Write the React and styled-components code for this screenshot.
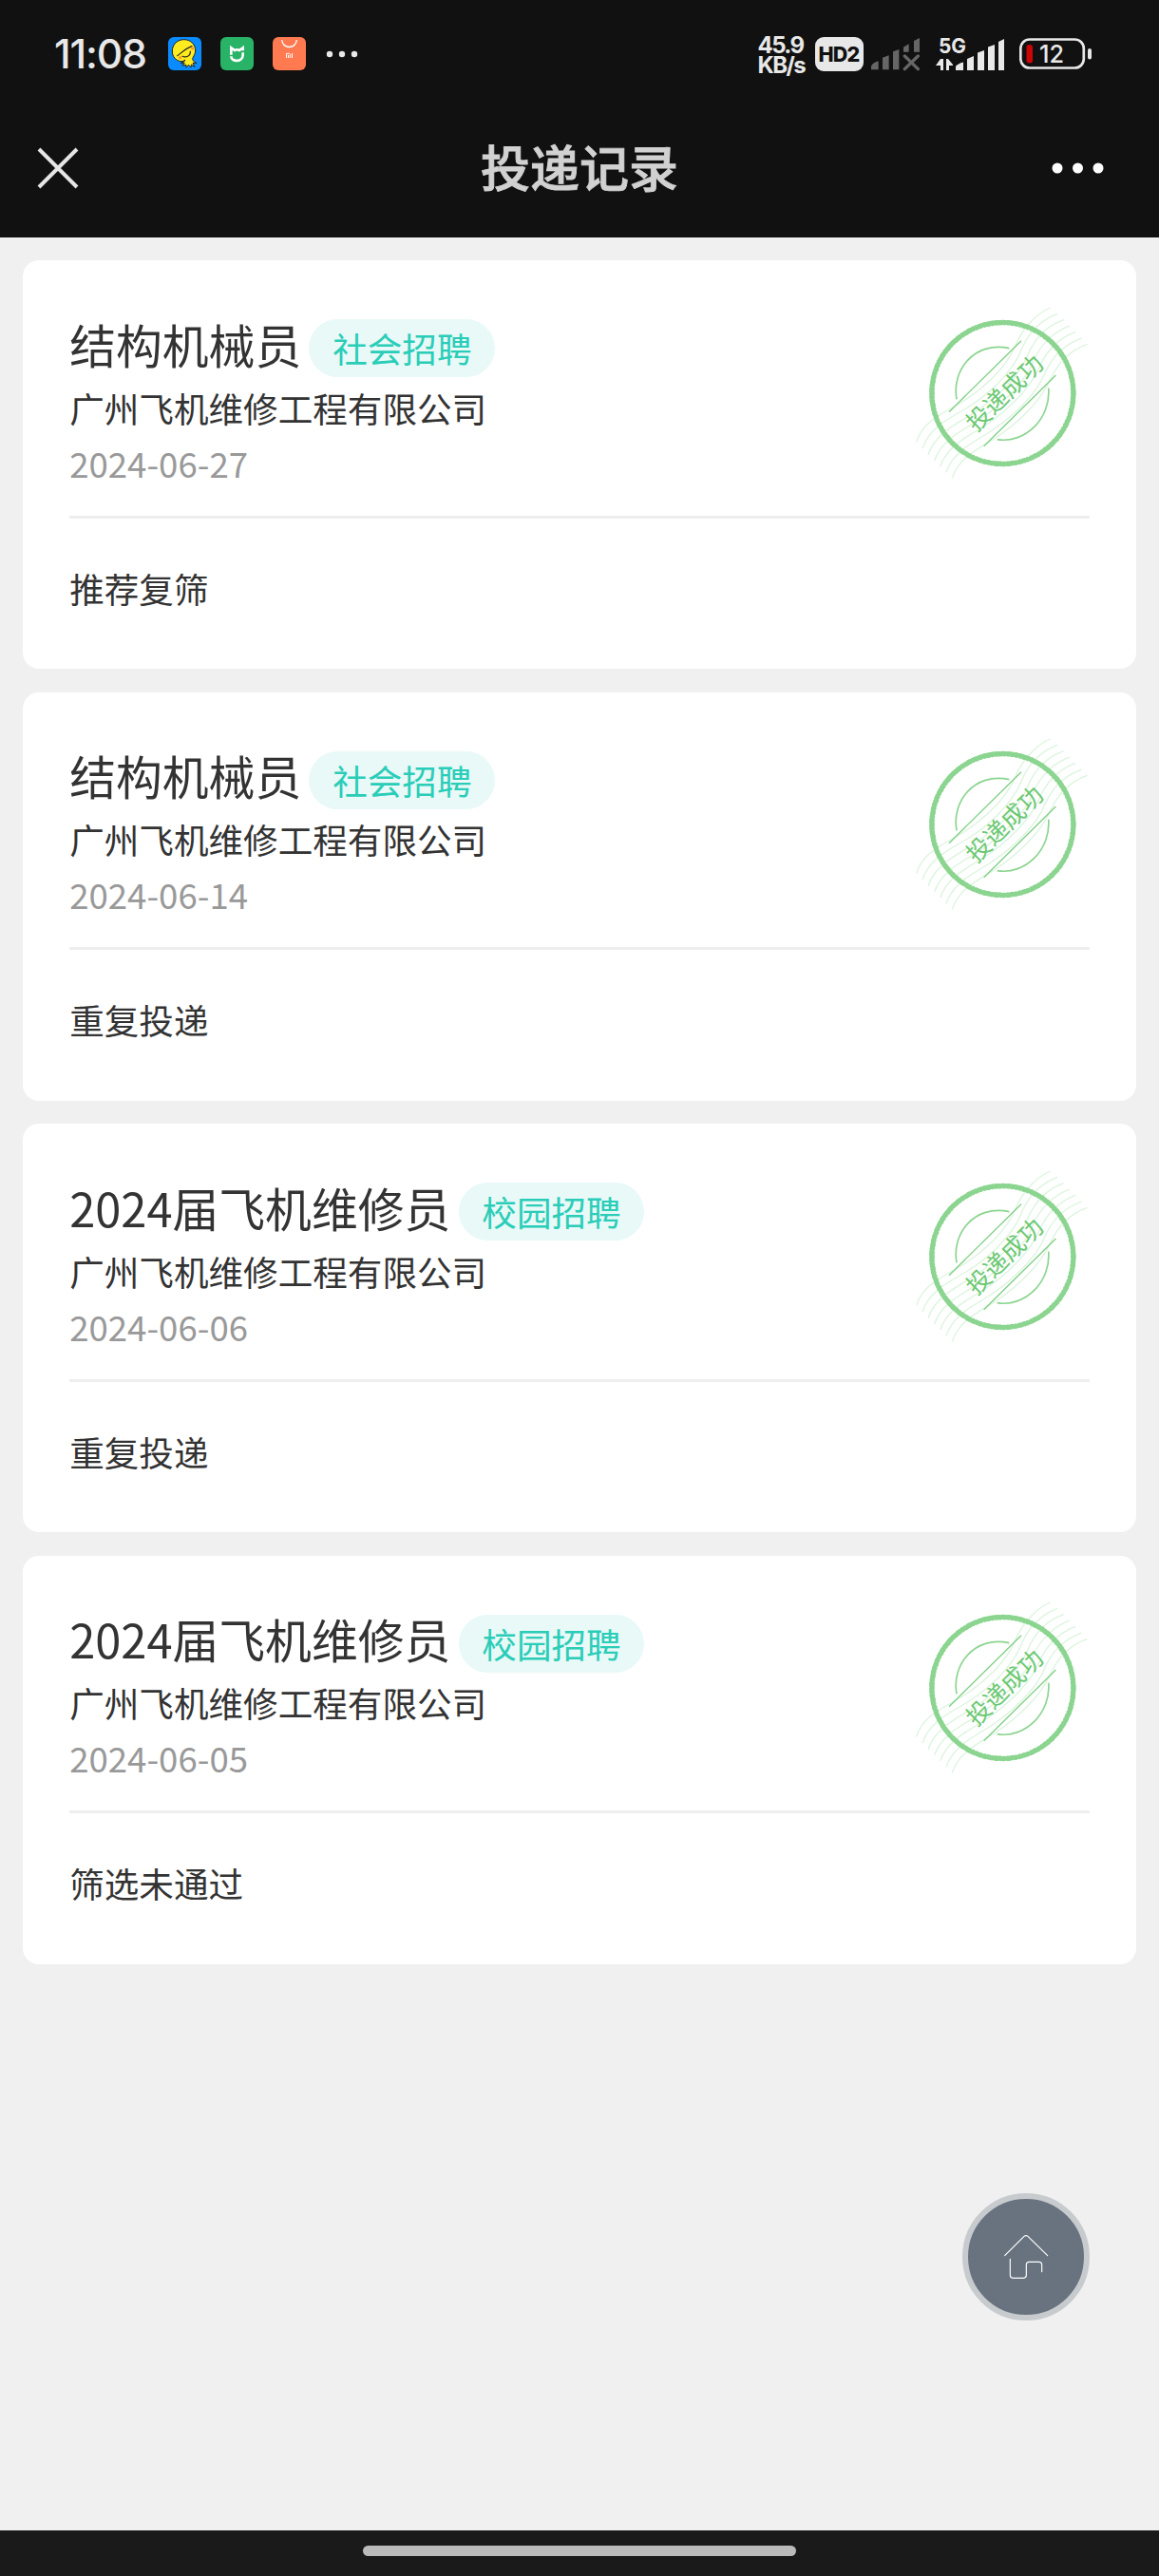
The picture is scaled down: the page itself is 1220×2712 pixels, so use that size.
import React from "react";
import styled, { createGlobalStyle } from "styled-components";

const cjk = `"Noto Sans CJK SC", "Noto Sans", sans-serif`;
const latin = `Inter, "Noto Sans CJK SC", sans-serif`;

const GlobalStyle = createGlobalStyle`
  * { box-sizing: border-box; }
  body { margin: 0; background: #f0f0f0; font-family: ${cjk}; }
  svg { display: block; flex: none; }
`;

const Screen = styled.div`
  position: relative;
  display: flex;
  flex-direction: column;
  width: 1220px;
  height: 2712px;
  overflow: hidden;
  background: #f0f0f0;
`;

const StatusBar = styled.div`
  display: flex;
  align-items: center;
  justify-content: space-between;
  height: 113px;
  padding: 0 71px 0 57px;
  background: #111;
  color: #e8e8e8;
  font-family: ${latin};
`;

const StatusGroup = styled.div`
  display: flex;
  align-items: center;
`;

const Clock = styled.span`
  width: 120px;
  font-size: 42.5px;
  font-weight: 500;
  line-height: 50px;
  letter-spacing: -1.1px;
  white-space: nowrap;
`;

const AppIcons = styled.div`
  display: flex;
  align-items: center;
  gap: 20px;
`;

const Speed = styled.div`
  display: flex;
  flex-direction: column;
  width: 60px;
  padding-top: 2px;
  font-size: 24px;
  font-weight: 700;
  line-height: 21px;
  letter-spacing: -1.6px;
  white-space: nowrap;
`;

const HdBadge = styled.span`
  display: flex;
  align-items: center;
  justify-content: center;
  width: 51px;
  height: 36px;
  margin-right: 8px;
  border-radius: 9px;
  background: #e8e8e8;
  color: #111;
  font-size: 21.5px;
  font-weight: 800;
  letter-spacing: -0.8px;
`;

const Gap = styled.span`
  width: ${(p) => p.$size}px;
`;

const NavBar = styled.header`
  display: grid;
  grid-template-columns: 60px 1fr 60px;
  align-items: center;
  height: 137px;
  padding: 0 54px 9px 37px;
  background: #111;
`;

const NavTitle = styled.h1`
  margin: 0;
  padding-left: 17px;
  color: #d1d1d1;
  font-size: 52px;
  font-weight: 500;
  line-height: 72px;
  text-align: center;
  padding-bottom: 5px;
  -webkit-text-stroke: 0.9px #d1d1d1;
`;

const List = styled.main`
  display: flex;
  flex: 1;
  flex-direction: column;
  gap: 24.4px;
  padding: 24.4px;
`;

const Card = styled.article`
  height: 430.1px;
  padding: 45.6px 48.8px 0;
  border-radius: 17px;
  background: #fff;
`;

const CardHead = styled.div`
  display: flex;
  align-items: flex-start;
  justify-content: space-between;
  height: 226px;
  border-bottom: 3px solid #eee;
`;

const Info = styled.div`
  display: flex;
  flex-direction: column;
  padding-top: 3px;
`;

const TitleRow = styled.div`
  display: flex;
  align-items: center;
  gap: 8.2px;
  height: 78px;
`;

const JobTitle = styled.h2`
  margin: 0;
  color: #333;
  font-size: 48.8px;
  font-weight: 400;
  line-height: 76px;
  white-space: nowrap;
`;

const Tag = styled.span`
  height: 61px;
  margin-top: 10px;
  padding: 1px 24.8px 0;
  border-radius: 30.5px;
  background: #e8f9f7;
  color: #2acdb8;
  font-size: 36.6px;
  line-height: 60px;
  white-space: nowrap;
`;

const Line = styled.p`
  margin: 0;
  color: ${(p) => (p.$muted ? "#999" : "#333")};
  font-size: 36.6px;
  line-height: 58px;
  white-space: nowrap;
`;

const CardFoot = styled.div`
  padding-top: 45px;
`;

const HomeButton = styled.button`
  position: absolute;
  left: 1013px;
  top: 2309px;
  display: flex;
  align-items: center;
  justify-content: center;
  width: 134px;
  height: 134px;
  padding: 0;
  border: 6px solid #c8cbce;
  border-radius: 50%;
  background: #68737f;
`;

const GestureBar = styled.footer`
  display: flex;
  justify-content: center;
  height: 48px;
  padding-top: 16px;
  background: #1a1a1a;
`;

const GesturePill = styled.div`
  width: 456px;
  height: 11px;
  border-radius: 6px;
  background: #bababa;
`;

const StampText = styled.text`
  font-family: ${cjk};
  font-size: 76px;
  fill: #6cc873;
`;

const BatteryText = styled.text`
  font-family: ${latin};
  font-size: 26px;
  font-weight: 500;
  fill: #e8e8e8;
`;

const NetText = styled.text`
  font-family: ${latin};
  font-size: 22px;
  font-weight: 700;
  fill: #e8e8e8;
`;

function DuckIcon() {
  return (
    <svg width="35" height="35" viewBox="0 0 105 105">
      <rect width="105" height="105" rx="18" fill="#0a8cff" />
      <path
        d="M40 77C24 74 13 62 13 45C13 23 29 8 50 8C72 8 87 24 86 45C85 57 77 63 77 70C77 76 86 80 90 82L78 82L84 94L73 87L72 96L65 88L56 96L57 88L44 90L52 82L40 82Q52 79 54 72Q48 78 40 77Z"
        fill="#ffec1f"
        stroke="#222"
        strokeWidth="3"
        strokeLinejoin="round"
      />
      <path d="M28 60C40 52 50 38 76 28M44 60C56 67 71 60 70 44" fill="none" stroke="#222" strokeWidth="3.500" />
      <circle cx="77" cy="36" r="5" fill="#ff9a2e" />
      <circle cx="38" cy="65" r="5" fill="#ff9a2e" />
    </svg>
  );
}

function MiHomeIcon() {
  return (
    <svg width="35" height="35" viewBox="0 0 105 105">
      <rect width="105" height="105" rx="18" fill="#29b366" />
      <path d="M34 56V34L45 42C50 39 55 39 60 42L71 34V43" fill="none" stroke="#fff" strokeWidth="8" />
      <path d="M71 49V56C71 80 34 80 34 61" fill="none" stroke="#fff" strokeWidth="8" />
    </svg>
  );
}

function MiStoreIcon() {
  return (
    <svg width="35" height="35" viewBox="0 0 105 105">
      <rect width="105" height="105" rx="18" fill="#ff7a50" />
      <path d="M29 9C31 39 74 39 76 9" fill="none" stroke="#fff" strokeWidth="4" />
      <path d="M43.500 66V52H52Q55 52 55 55V66M49.500 57V66M61.500 51V66" fill="none" stroke="#fff" strokeWidth="3" />
    </svg>
  );
}

function Dots({ width, height, gap, r, color }) {
  return (
    <svg width={width} height={height}>
      {[-1, 0, 1].map((i) => (
        <circle key={i} cx={width / 2 + i * gap} cy={height / 2} r={r} fill={color} />
      ))}
    </svg>
  );
}

function NoSignalIcon() {
  return (
    <svg width="52" height="36" viewBox="0 0 156 108" fill="#666">
      <path d="M0 103V92Q4 82 23 76V103ZM36 103V65L56 58V103ZM69 103V46L88 39V103ZM102 47V32L119 22V47ZM135 47V12L153 3V47Z" />
      <path d="M106 60L148 101M148 60L106 101" stroke="#666" strokeWidth="10" strokeLinecap="round" />
    </svg>
  );
}

function SignalIcon() {
  return (
    <svg width="74" height="50" viewBox="0 -6 74 50" fill="#e8e8e8">
      <NetText x="3" y="18" textLength="29" lengthAdjust="spacingAndGlyphs">
        5G
      </NetText>
      <path d="M5 24H8V36H5V31L0 31ZM11 24H13L18 30V31H14V36H11Z" />
      <path d="M21 36V32Q23 29 29 27.500V36ZM33 36V24L40 21V36ZM44 36V17.500L51 15V36ZM55 36V11.500L62 9V36ZM66 36V6L72 3V36Z" />
    </svg>
  );
}

function BatteryIcon() {
  return (
    <svg width="76" height="36" viewBox="0 0 76 36">
      <rect x="1.300" y="2.500" width="66.500" height="30" rx="9.500" fill="none" stroke="#e8e8e8" strokeWidth="2.700" />
      <rect x="72" y="12" width="4" height="11.500" rx="2" fill="#e8e8e8" />
      <rect x="7.500" y="8" width="6.500" height="19.500" rx="3" fill="#cc0505" />
      <BatteryText x="21" y="27" textLength="26" lengthAdjust="spacingAndGlyphs">
        12
      </BatteryText>
    </svg>
  );
}

function CloseIcon() {
  return (
    <svg width="48" height="48" viewBox="0 0 48 48">
      <path d="M4 4L44 44M44 4L4 44" stroke="#e6e6e6" strokeWidth="4" />
    </svg>
  );
}

const postmarkWaves = [
  "M498 72C465 85 415 125 388 190C360 260 290 325 215 372C160 405 95 430 75 496",
  "M520 91C475 108 430 145 405 208C378 275 305 345 232 390C180 420 115 450 94 516",
  "M540 110C495 126 450 162 425 225C398 292 325 360 250 408C200 440 133 470 112 536",
  "M558 129C515 145 468 182 443 243C416 310 343 380 270 428C220 460 153 490 132 555",
  "M577 148C533 165 488 200 462 262C434 328 362 398 288 446C238 478 172 508 150 573",
  "M596 168C552 184 506 218 480 280C453 346 380 416 306 465C256 496 190 526 169 592",
  "M614 187C570 203 525 238 498 298C470 364 398 434 325 483C275 515 208 545 188 610",
];

function Stamp() {
  return (
    <svg width="183.400" height="186.700" viewBox="70 60 550 560" fill="none">
      <g stroke="#d9f3db" strokeWidth="4" opacity="0.9">
        {postmarkWaves.map((d) => (
          <path key={d} d={d} />
        ))}
      </g>
      <circle cx="347" cy="342" r="223.500" stroke="#8bd590" strokeWidth="15" />
      <circle cx="347" cy="342" r="229" stroke="#8bd590" strokeWidth="5" strokeDasharray="9 3 4 5 14 4" />
      <circle cx="347" cy="342" r="217" stroke="#8bd590" strokeWidth="4" strokeDasharray="5 4 12 3 7 6" />
      <path d="M202 361C185 270 258 176 368 200M492 326C500 420 420 502 330 488" stroke="#8bd590" strokeWidth="5" />
      <path d="M178 401L406 176M288 509L515 285" stroke="#7fd085" strokeWidth="4" />
      <StampText x="0" y="28" textAnchor="middle" transform="translate(353 341) rotate(-44.500)">
        投递成功
      </StampText>
    </svg>
  );
}

function HomeIcon() {
  return (
    <svg width="50" height="50" viewBox="0 0 150 150" fill="none" stroke="#fff" strokeWidth="3.500" strokeLinecap="round">
      <path d="M8 71L66 13Q75 3 84 13L143 71" />
      <path d="M25 82V133Q25 142 34 142H67Q76 142 76 133V100Q76 91 85 91H116Q125 91 125 100V122" />
    </svg>
  );
}

const records = [
  { title: "结构机械员", tag: "社会招聘", date: "2024-06-27", status: "推荐复筛" },
  { title: "结构机械员", tag: "社会招聘", date: "2024-06-14", status: "重复投递" },
  { title: "2024届飞机维修员", tag: "校园招聘", date: "2024-06-06", status: "重复投递" },
  { title: "2024届飞机维修员", tag: "校园招聘", date: "2024-06-05", status: "筛选未通过" },
];

function RecordCard({ title, tag, date, status }) {
  return (
    <Card>
      <CardHead>
        <Info>
          <TitleRow>
            <JobTitle>{title}</JobTitle>
            <Tag>{tag}</Tag>
          </TitleRow>
          <Line>广州飞机维修工程有限公司</Line>
          <Line $muted>{date}</Line>
        </Info>
        <Stamp />
      </CardHead>
      <CardFoot>
        <Line>{status}</Line>
      </CardFoot>
    </Card>
  );
}

export default function App() {
  return (
    <>
      <GlobalStyle />
      <Screen>
        <StatusBar>
          <StatusGroup>
            <Clock>11:08</Clock>
            <AppIcons>
              <DuckIcon />
              <MiHomeIcon />
              <MiStoreIcon />
              <Dots width={36} height={10} gap={13} r={3.2} color="#e8e8e8" />
            </AppIcons>
          </StatusGroup>
          <StatusGroup>
            <Speed>
              <span>45.9</span>
              <span>KB/s</span>
            </Speed>
            <HdBadge>HD2</HdBadge>
            <NoSignalIcon />
            <Gap $size={16.5} />
            <SignalIcon />
            <Gap $size={14} />
            <BatteryIcon />
          </StatusGroup>
        </StatusBar>
        <NavBar>
          <CloseIcon />
          <NavTitle>投递记录</NavTitle>
          <Dots width={57} height={14} gap={21.5} r={5.5} color="#fff" />
        </NavBar>
        <List>
          {records.map((record) => (
            <RecordCard key={record.date} {...record} />
          ))}
        </List>
        <HomeButton aria-label="首页">
          <HomeIcon />
        </HomeButton>
        <GestureBar>
          <GesturePill />
        </GestureBar>
      </Screen>
    </>
  );
}
